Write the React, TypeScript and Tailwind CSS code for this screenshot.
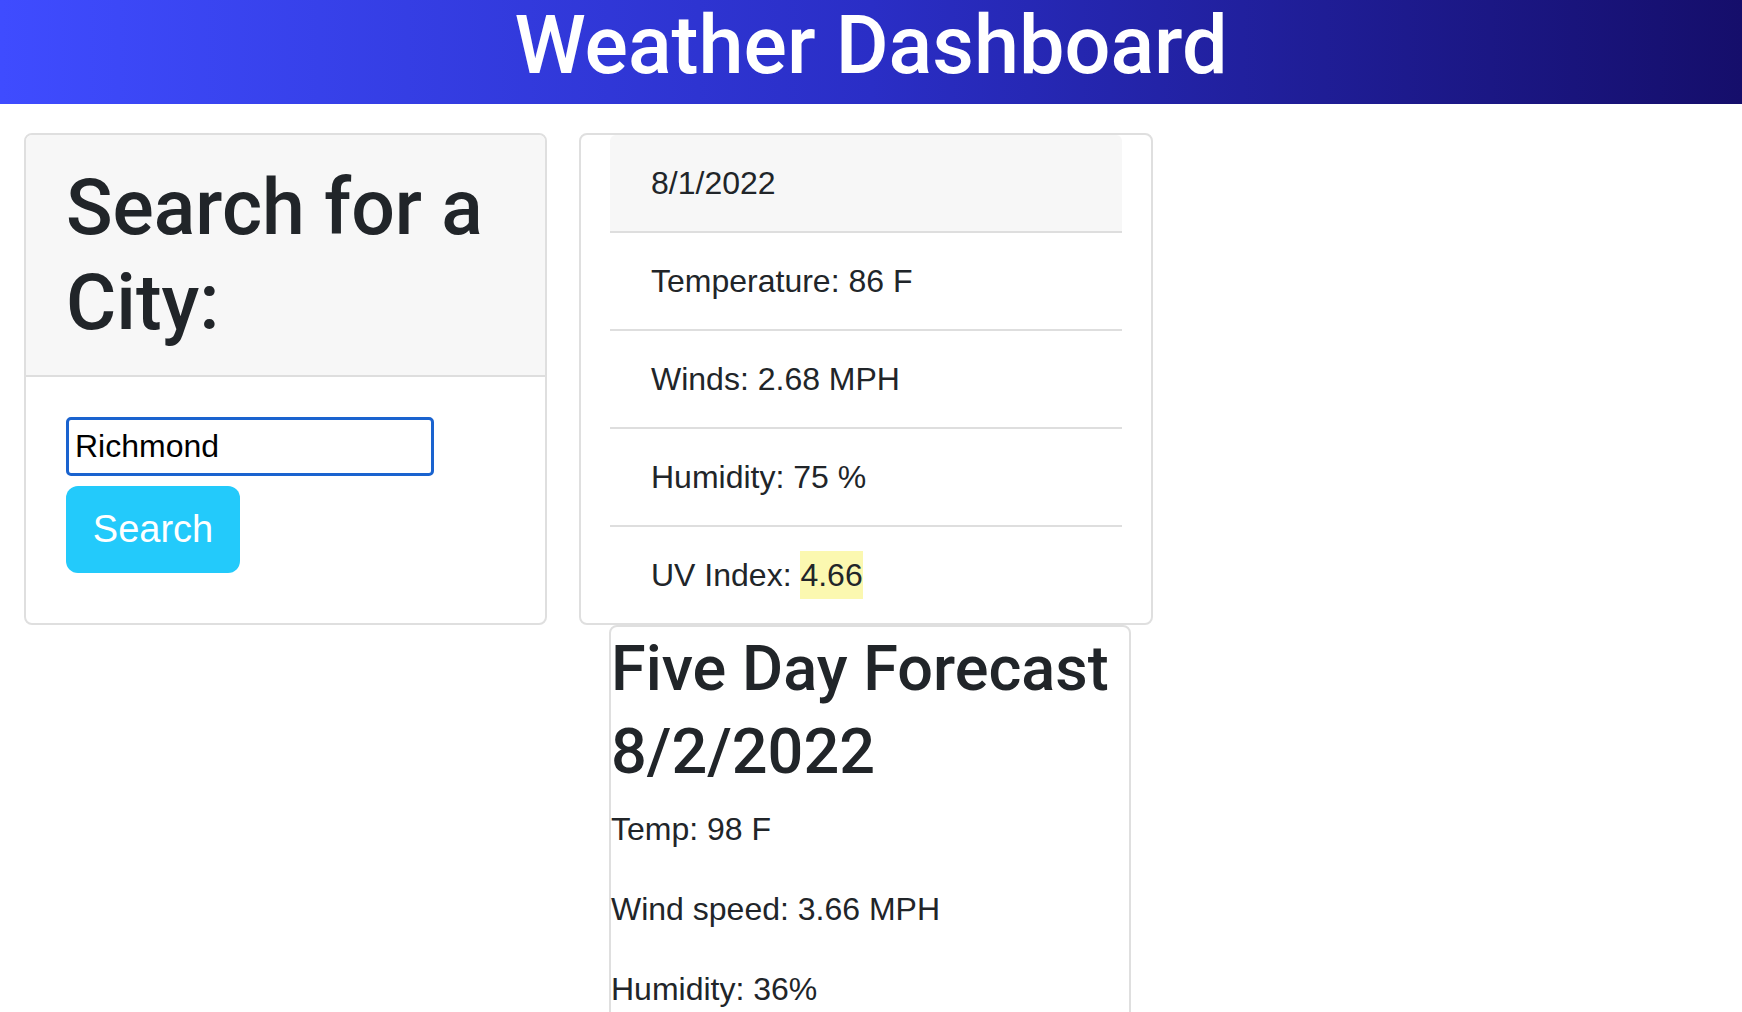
import React from "react";

const font = { fontFamily: '"Liberation Sans", Arial, Helvetica, sans-serif' };
const heading = { fontFamily: 'Roboto, "Liberation Sans", Arial, sans-serif' };

const current = [
    { label: "8/1/2022", muted: true },
    { label: "Temperature: 86 F" },
    { label: "Winds: 2.68 MPH" },
    { label: "Humidity: 75 %" },
];

export default function App() {
    return (
        <div className="min-h-screen bg-white text-[#212529]" style={font}>
            <header className="h-[104px] bg-linear-to-r from-[#3f4cff] via-[#2a2ec6] to-[#150e6b] flex justify-center">
                <h1 className="text-[81px] leading-[92px] font-medium text-white" style={heading}>
                    Weather Dashboard
                </h1>
            </header>

            <main className="flex items-start pt-[29px] pl-[24px] gap-[32px]">
                {/* search card */}
                <section className="w-[523px] border-2 border-[#dfdfdf] rounded-[8px] overflow-hidden">
                    <div className="bg-[#f7f7f7] border-b-2 border-[#dedede] pl-[40px] pr-[30px] pt-[26px] pb-[24px]">
                        <h2 className="text-[77px] leading-[95px] font-medium" style={heading}>
                            Search for a City:
                        </h2>
                    </div>
                    <div className="pl-[40px] pt-[40px] pb-[50px] flex flex-col items-start gap-[10px]">
                        <input
                            defaultValue="Richmond"
                            className="w-[368px] h-[59px] border-[3px] border-[#1a63cf] rounded-[5px] pl-[6px] text-[32px] text-black outline-none"
                            style={font}
                        />
                        <button className="w-[174px] h-[87px] rounded-[12px] bg-[#23cafb] text-white text-[38px]" style={font}>
                            Search
                        </button>
                    </div>
                </section>

                {/* current weather + forecast */}
                <div className="w-[574px] flex flex-col">
                    <section className="border-2 border-[#dfdfdf] rounded-[8px]">
                        <ul className="mx-[29px] flex flex-col">
                            {current.map((c) => (
                                <li
                                    key={c.label}
                                    className={
                                        "h-[96px] box-content border-b-2 border-[#dedede] pl-[41px] flex items-center text-[32px] " +
                                        (c.muted ? "bg-[#f7f7f7] rounded-t-[6px]" : "")
                                    }
                                >
                                    {c.label}
                                </li>
                            ))}
                            <li className="h-[96px] pl-[41px] flex items-center text-[32px]">
                                UV Index:&nbsp;<span className="bg-[#fbf8b0]">4.66</span>
                            </li>
                        </ul>
                    </section>

                    <section className="ml-[30px] w-[522px] border-2 border-[#dfdfdf] rounded-t-[8px] pb-[10px]">
                        <h2 className="text-[63px] leading-[83px] font-medium mb-[12px]" style={heading}>
                            Five Day Forecast
                            <br />
                            8/2/2022
                        </h2>
                        <p className="text-[32px] leading-[48px] mb-[32px]">Temp: 98 F</p>
                        <p className="text-[32px] leading-[48px] mb-[32px]">Wind speed: 3.66 MPH</p>
                        <p className="text-[32px] leading-[48px] mb-[32px]">Humidity: 36%</p>
                    </section>
                </div>
            </main>
        </div>
    );
}
